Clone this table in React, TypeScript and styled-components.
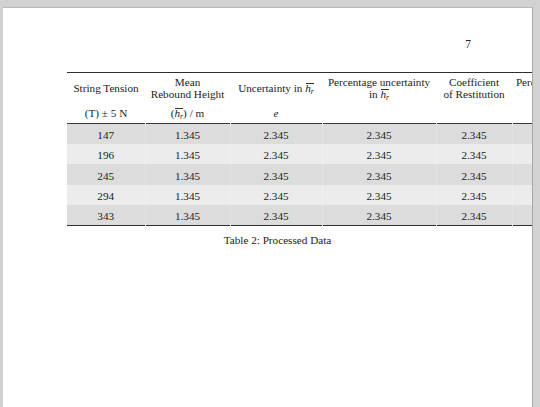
import React from "react";
import styled, { createGlobalStyle } from "styled-components";

const GlobalStyle = createGlobalStyle`
  html, body {
    margin: 0;
    padding: 0;
    height: 100%;
    background: #d2d2d2;
    overflow: hidden;
  }
  #root {
    height: 100%;
  }
`;

// The viewer frame around the page
const Viewer = styled.div`
  height: 100%;
  padding: 7px 7px 0 3px;
  box-sizing: border-box;
`;

const Page = styled.div`
  height: 100%;
  background: #fff;
  border-top: 1px solid #b9b9b9;
  border-right: 1px solid #a9a9a9;
  box-sizing: border-box;
  overflow: hidden;
  padding: 0 0 0 64px;
  font-family: "Liberation Serif", "DejaVu Serif", serif;
  color: #222;
`;

const PageHeader = styled.div`
  display: flex;
  justify-content: flex-end;
  padding: 30px 61px 0 0;
  height: 12px;
  line-height: 12px;
  font-size: 11.5px;
`;

const TableBlock = styled.div`
  margin-top: 22px;
  width: 555px;
`;

const Table = styled.table`
  border-collapse: collapse;
  table-layout: fixed;
  width: 555px;
  font-size: 11.2px;
  border-top: 1.6px solid #2e2e2e;
  border-bottom: 1.6px solid #2e2e2e;
`;

const HeadRow = styled.tr<{ $last?: boolean }>`
  border-bottom: ${(p) => (p.$last ? "1px solid #3a3a3a" : "none")};
`;

const HeadCell = styled.th<{ $top?: boolean }>`
  font-weight: normal;
  text-align: center;
  vertical-align: middle;
  line-height: 12px;
  padding: ${(p) => (p.$top ? "3px 2px 0" : "7px 2px 4px")};
  white-space: nowrap;
`;

const DataRow = styled.tr<{ $dark: boolean }>`
  background: ${(p) => (p.$dark ? "#dcdcdc" : "#ececec")};
`;

const Cell = styled.td`
  text-align: center;
  height: 20.4px;
  padding: 3px 2px 0;
  line-height: 17px;
  box-sizing: border-box;
  & + & {
    border-left: 1px solid rgba(255, 255, 255, 0.22);
  }
`;

// overline over h_r, sits just above the h
const Bar = styled.span`
  position: relative;
  white-space: nowrap;
  &::before {
    content: "";
    position: absolute;
    left: 1px;
    right: 0;
    top: 0.12em;
    border-top: 0.8px solid #333;
  }
`;

const Sub = styled.sub`
  font-size: 0.7em;
  vertical-align: -0.2em;
  line-height: 0;
`;

const Caption = styled.div`
  width: 421px;
  text-align: center;
  margin-top: 8px;
  line-height: 12px;
  font-size: 11.2px;
`;

const Hr = () => (
  <Bar>
    <i>h</i>
    <Sub>
      <i>r</i>
    </Sub>
  </Bar>
);

const widths = [78, 85, 92, 114, 76, 110];
const tensions = [147, 196, 245, 294, 343];

const App: React.FC = () => {
  return (
    <>
      <GlobalStyle />
      <Viewer>
        <Page>
          <PageHeader>7</PageHeader>
          <TableBlock>
            <Table>
              <colgroup>
                {widths.map((w, i) => (
                  <col key={i} style={{ width: w }} />
                ))}
              </colgroup>
              <thead>
                <HeadRow>
                  <HeadCell $top>String Tension</HeadCell>
                  <HeadCell $top>
                    Mean
                    <br />
                    Rebound Height
                  </HeadCell>
                  <HeadCell $top>
                    Uncertainty in <Hr />
                  </HeadCell>
                  <HeadCell $top>
                    Percentage uncertainty
                    <br />
                    in <Hr />
                  </HeadCell>
                  <HeadCell $top>
                    Coefficient
                    <br />
                    of Restitution
                  </HeadCell>
                  <HeadCell $top>
                    Percentage uncertainty
                    <br />
                    in <i>e</i>
                  </HeadCell>
                </HeadRow>
                <HeadRow $last>
                  <HeadCell>(T) ± 5 N</HeadCell>
                  <HeadCell>
                    (<Hr />) / m
                  </HeadCell>
                  <HeadCell>
                    <i>e</i>
                  </HeadCell>
                  <HeadCell />
                  <HeadCell />
                  <HeadCell />
                </HeadRow>
              </thead>
              <tbody>
                {tensions.map((t, i) => (
                  <DataRow key={t} $dark={i % 2 === 0}>
                    <Cell>{t}</Cell>
                    <Cell>1.345</Cell>
                    <Cell>2.345</Cell>
                    <Cell>2.345</Cell>
                    <Cell>2.345</Cell>
                    <Cell>2.345</Cell>
                  </DataRow>
                ))}
              </tbody>
            </Table>
            <Caption>Table 2: Processed Data</Caption>
          </TableBlock>
        </Page>
      </Viewer>
    </>
  );
};

export default App;
